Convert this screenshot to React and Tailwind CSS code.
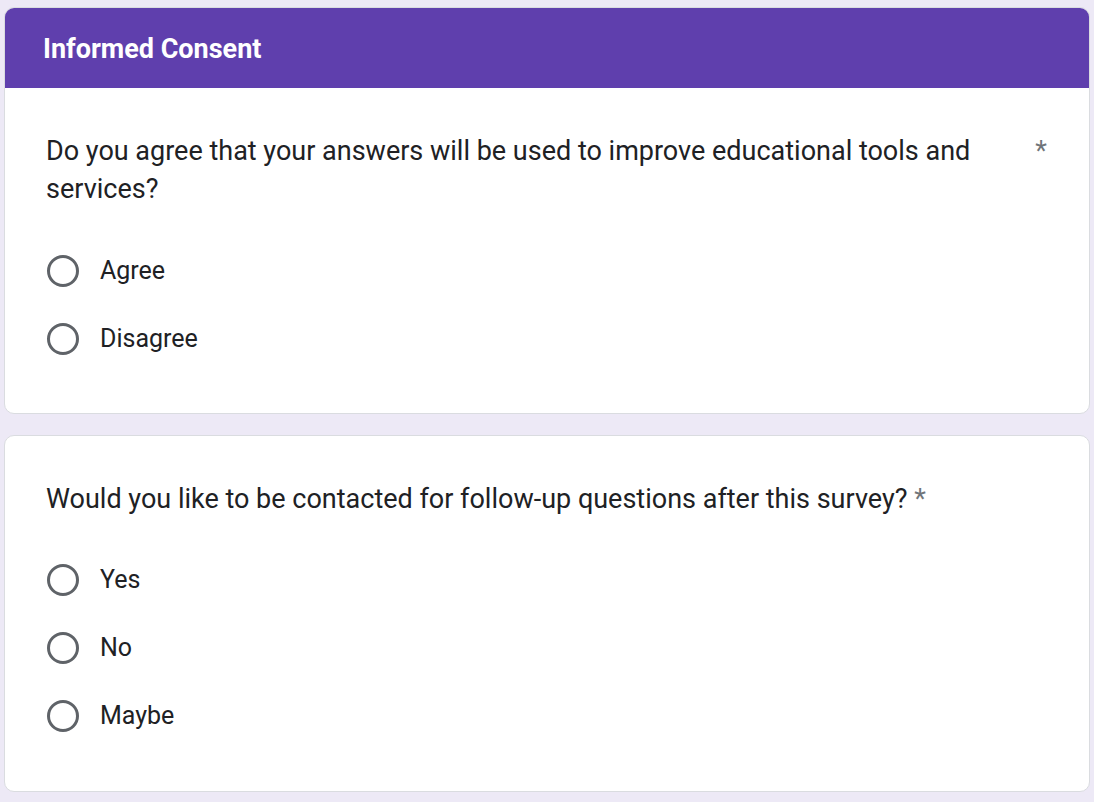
import React from 'react';

const Radio = ({ label }) => (
  <label className="flex h-[68px] items-center gap-[21px] pl-[1px] cursor-pointer">
    <span className="h-[32px] w-[32px] shrink-0 rounded-full border-[3px] border-[#5f6368] bg-white"></span>
    <span className="text-[25px] text-[#202124]">{label}</span>
  </label>
);

const App = () => {
  return (
    <div className="min-h-screen bg-[#ede9f6] px-[4px] pt-[7px] pb-[11px] font-['Roboto',sans-serif]">
      <div className="flex flex-col gap-[21px]">
        <div className="overflow-hidden rounded-[10px] border border-[#dadce0] bg-white">
          <div className="flex h-[81px] items-center bg-[#5f3fad] px-[39px] pt-[4px] -mx-px -mt-px">
            <h1 className="text-[27px] font-bold text-white">Informed Consent</h1>
          </div>
          <div className="px-[41px] pt-[44px] pb-[40px]">
            <div className="flex items-start justify-between">
              <p className="max-w-[960px] text-[27px] leading-[38px] text-[#202124]">
                Do you agree that your answers will be used to improve educational tools and services?
              </p>
              <span className="mr-[1px] text-[27px] leading-[38px] text-[#70757a]">*</span>
            </div>
            <div className="mt-[29px] flex flex-col">
              <Radio label="Agree" />
              <Radio label="Disagree" />
            </div>
          </div>
        </div>

        <div className="rounded-[10px] border border-[#dadce0] bg-white px-[41px] pt-[44px] pb-[41px]">
          <p className="text-[27px] leading-[38px] text-[#202124]">
            Would you like to be contacted for follow-up questions after this survey?{' '}
            <span className="text-[#70757a]">*</span>
          </p>
          <div className="mt-[28px] flex flex-col">
            <Radio label="Yes" />
            <Radio label="No" />
            <Radio label="Maybe" />
          </div>
        </div>
      </div>
    </div>
  );
};

export default App;
